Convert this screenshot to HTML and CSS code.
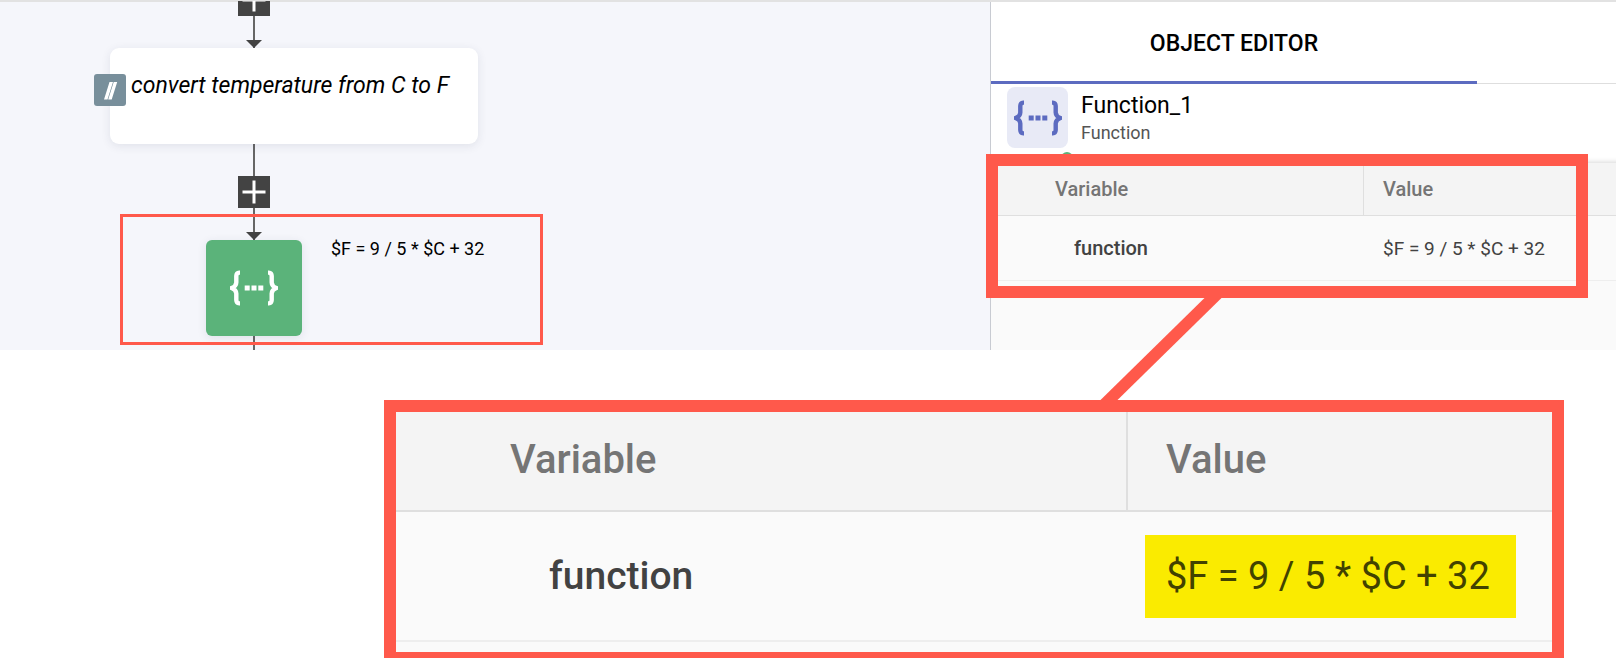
FILE: index.html
```html
<!DOCTYPE html>
<html lang="en">
<head>
<meta charset="utf-8">
<title>Object editor</title>
<link rel="stylesheet" href="styles.css">
</head>
<body>
<svg class="defs" aria-hidden="true">
  <symbol id="braces" viewBox="0 0 48 36">
    <g fill="none" stroke="currentColor" stroke-width="4.4">
      <path d="M10 2.6H9.3Q6.400 2.800 6.300 6V12.500Q6.200 16.300 1.600 18Q6.200 19.700 6.300 23.500V30Q6.400 33.200 9.300 33.400H10"/>
      <path d="M38 2.600H38.700Q41.600 2.800 41.700 6V12.500Q41.800 16.300 46.400 18Q41.800 19.700 41.700 23.500V30Q41.600 33.200 38.700 33.400H38"/>
    </g>
    <path fill="currentColor" d="M14.700 15.500h5v5h-5zM21.500 15.500h5v5h-5zM28.300 15.500h5v5h-5z"/>
  </symbol>
  <symbol id="plus" viewBox="0 0 32 32">
    <path d="M16 4.500v23M4.500 16h23" stroke="currentColor" stroke-width="3" fill="none"/>
  </symbol>
</svg>

<main class="page">
  <div class="workspace">
    <section class="canvas" aria-label="Flow">
      <span class="wire"></span>
      <button class="add add-first" aria-label="Add step"><svg><use href="#plus"/></svg></button>
      <span class="arrow arrow-first"></span>
      <article class="comment">
        <svg class="comment-icon" viewBox="0 0 32 32" aria-hidden="true"><path fill="#fff" d="M15.500 8H19L13.500 25.500H10zM19.700 8H23.200L17.700 25.500H14.200z"/></svg>
        <p class="comment-text">convert temperature from C to F</p>
      </article>
      <button class="add add-second" aria-label="Add step"><svg><use href="#plus"/></svg></button>
      <span class="arrow arrow-second"></span>
      <div class="function-node"><svg class="braces"><use href="#braces"/></svg></div>
      <p class="node-label">$F = 9 / 5 * $C + 32</p>
      <div class="node-outline"></div>
    </section>

    <aside class="panel">
      <header class="tabs"><h1 class="tab">OBJECT EDITOR</h1></header>
      <div class="object">
        <div class="object-icon"><svg class="braces"><use href="#braces"/></svg><span class="status"></span></div>
        <div>
          <h2 class="object-name">Function_1</h2>
          <p class="object-type">Function</p>
        </div>
      </div>
      <table class="vars">
        <thead><tr><th class="name">Variable</th><th>Value</th></tr></thead>
        <tbody><tr><td class="name">function</td><td>$F = 9 / 5 * $C + 32</td></tr></tbody>
      </table>
      <div class="frame"></div>
      <svg class="connector" viewBox="0 0 122 102" aria-hidden="true"><path fill="#ff594b" d="M104.500 0H121.500L17.500 102H.5z"/></svg>
    </aside>
  </div>

  <section class="detail" aria-label="Enlarged variables">
    <table class="vars vars-large">
      <thead><tr><th class="name">Variable</th><th>Value</th></tr></thead>
      <tbody><tr><td class="name">function</td><td><mark>$F = 9 / 5 * $C + 32</mark></td></tr></tbody>
    </table>
  </section>
</main>
</body>
</html>
```

FILE: styles.css
```css
* { box-sizing: border-box; }
body { margin: 0; background: #fff; color: #000; font-family: Roboto, "Liberation Sans", sans-serif; }
h1, h2, p { margin: 0; font-weight: 400; }
svg { display: block; }
.defs { position: absolute; width: 0; height: 0; }

.workspace { display: flex; height: 350px; margin-right: 6px; border-top: 2px solid #e2e2e2; }

/* Flow canvas */
.canvas { position: relative; flex: 1; background: #f5f6fb; }
.wire { position: absolute; left: 253px; top: 0; bottom: 0; width: 2px; background: #666; }
.add { position: absolute; left: 238px; width: 32px; height: 32px; padding: 0; border: 0; background: #434343; color: #fff; }
.add svg { width: 32px; height: 32px; }
.add-first { top: -18px; clip-path: inset(17px 0 0 0); }
.add-second { top: 174px; }
.arrow { position: absolute; left: 246px; border: 8px solid transparent; border-top-color: #434343; border-bottom: 0; }
.arrow-first { top: 38px; }
.arrow-second { top: 230px; }
.comment { position: absolute; left: 110px; top: 46px; width: 368px; height: 96px; padding: 24px 21px; border-radius: 9px; background: #fff; box-shadow: 0 2px 10px rgba(40, 50, 80, .1); }
.comment-icon { position: absolute; left: -16px; top: 26px; width: 32px; height: 32px; border-radius: 3px; background: #788f9b; }
.comment-text { font-size: 23px; line-height: 28px; font-style: italic; white-space: nowrap; }
.function-node { position: absolute; left: 206px; top: 238px; width: 96px; height: 96px; display: grid; place-items: center; border-radius: 6px; background: #5bb37a; color: #fff; box-shadow: 0 2px 10px rgba(40, 50, 80, .1); }
.braces { width: 48px; height: 36px; }
.node-label { position: absolute; left: 331px; top: 235px; font-size: 18px; line-height: 24px; white-space: nowrap; }
.node-outline { position: absolute; left: 120px; top: 212px; width: 423px; height: 131px; border: 3px solid #ff594b; }

/* Object editor */
.panel { position: relative; width: 626px; border-left: 1px solid #c8cbd2; background: #fafafa; }
.tabs { height: 82px; background: #fff; border-bottom: 1px solid #dedede; }
.tab { width: 486px; height: 82px; padding-top: 2px; border-bottom: 3px solid #5c6bc0; font-size: 23px; line-height: 80px; font-weight: 500; text-align: center; }
.object { display: flex; gap: 13px; height: 79px; padding: 3px 16px; background: #fff; box-shadow: inset 0 -6px 5px -5px rgba(0, 0, 0, .16); }
.object-icon { position: relative; width: 61px; height: 61px; display: grid; place-items: center; border-radius: 8px; background: #e8eaf6; color: #5c6bc0; }
.object-name { padding-top: 4px; font-size: 23px; line-height: 30px; }
.object-type { font-size: 18px; line-height: 24px; color: #555; }
.status { position: absolute; left: 54px; top: 65px; width: 12px; height: 12px; border-radius: 50%; background: #5bb37a; }

.vars { position: relative; width: 100%; border-spacing: 0; table-layout: fixed; background: #fafafa; font-size: 19px; text-align: left; color: #424242; }
.vars th { height: 53px; padding: 0 0 0 19px; border-bottom: 1px solid #dfdfdf; background: #f4f4f4; color: #757575; font-size: 20px; font-weight: 500; }
.vars td { height: 65px; padding: 0 0 0 19px; border-bottom: 1px solid #eee; white-space: nowrap; }
.vars .name { width: 373px; padding-left: 64px; font-weight: 500; }
.vars th.name { border-right: 1px solid #dfdfdf; }
.vars td.name { padding-left: 83px; font-size: 20px; }

/* Highlight frame and its enlarged copy */
.frame { position: absolute; left: -5px; top: 152px; right: 28px; height: 144px; border: 12px solid #ff594b; }
.connector { position: absolute; left: 109px; top: 296px; width: 122px; height: 102px; }

.detail { margin: 50px 58px 0 384px; padding-bottom: 10px; border: 12px solid #ff594b; border-bottom-width: 6px; background: #fafafa; }
.vars-large { font-size: 38px; }
.vars-large th { height: 100px; padding: 0 0 4px 38px; border-bottom-width: 2px; font-size: 40px; }
.vars-large td { height: 130px; padding-left: 17px; border-bottom-width: 2px; }
.vars-large .name { width: 732px; padding-left: 114px; }
.vars-large th.name { border-right-width: 2px; }
.vars-large td.name { padding-left: 153px; font-size: 39px; }
.vars-large mark { display: inline-block; width: 371px; padding: 0 21px; background: #faeb00; color: #424200; line-height: 83px; }
```
